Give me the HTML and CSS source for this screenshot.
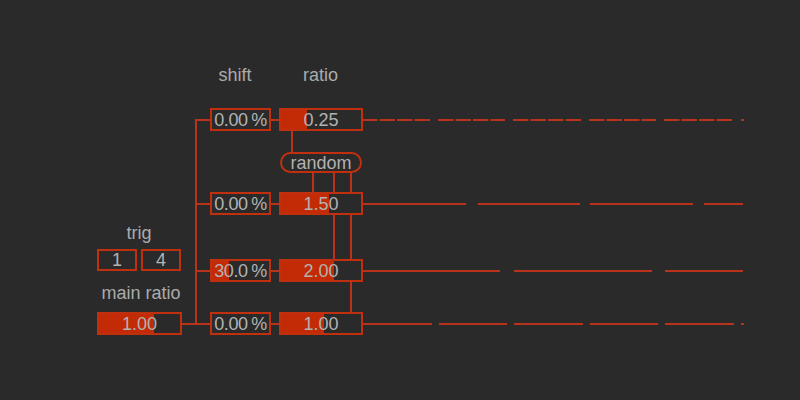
FILE: index.html
```html
<!DOCTYPE html>
<html>
<head>
<meta charset="utf-8">
<link rel="stylesheet" href="styles.css">
</head>
<body>
<div class="patch">
  <svg class="wires" width="800" height="400" viewBox="0 0 800 400">
    <g class="cords">
      <path d="M196 119 V325"/>
      <path d="M196 120 H211 M196 204 H211 M196 271 H211 M181 324 H211"/>
      <path d="M269 120 H280 M269 204 H280 M269 271 H280 M269 324 H280"/>
      <path d="M292 130 V153 M313 171 V193 M334 171 V260 M351 171 V313"/>
    </g>
    <g class="cords fine">
      <path d="M362 120 H430 M438 120 H505 M513 120 H581 M589 120 H656 M664 120 H732"/>
    </g>
    <g class="cords">
      <path d="M741 120 H744"/>
      <path d="M362 204 H466 M478 204 H580 M590 204 H693 M704 204 H743"/>
      <path d="M362 271 H500 M514 271 H652 M665 271 H743"/>
      <path d="M362 324 H432 M439 324 H507 M514 324 H583 M590 324 H658 M665 324 H734 M741 324 H744"/>
    </g>
  </svg>

  <div class="label lbl-shift">shift</div>
  <div class="label lbl-ratio">ratio</div>
  <div class="label lbl-trig">trig</div>
  <div class="label lbl-main">main ratio</div>

  <div class="num trig-a"><span>1</span></div>
  <div class="num trig-b"><span>4</span></div>
  <div class="num main"><div class="fill" style="width:55px"></div><span>1.00</span></div>

  <div class="num shift r1"><span>0.00 %</span></div>
  <div class="num shift r2"><span>0.00 %</span></div>
  <div class="num shift r3"><div class="fill" style="width:17px"></div><span>30.0 %</span></div>
  <div class="num shift r4"><span>0.00 %</span></div>

  <div class="num ratio r1"><div class="fill" style="width:26px"></div><span>0.25</span></div>
  <div class="num ratio r2"><div class="fill" style="width:48px"></div><span>1.50</span></div>
  <div class="num ratio r3"><div class="fill" style="width:53px"></div><span>2.00</span></div>
  <div class="num ratio r4"><div class="fill" style="width:43px"></div><span>1.00</span></div>

  <div class="msg random">random</div>
</div>
</body>
</html>
```

FILE: styles.css
```css
html, body {
  margin: 0;
  padding: 0;
  background: #2a2a2a;
}

.patch {
  position: relative;
  width: 800px;
  height: 400px;
  background: #2a2a2a;
  font-family: "Liberation Sans", Arial, sans-serif;
  font-size: 18px;
  color: #b2b2b2;
  overflow: hidden;
}

.wires {
  position: absolute;
  left: 0;
  top: 0;
}

.cords path {
  fill: none;
  stroke: #b8321c;
  stroke-width: 2;
  stroke-linecap: butt;
}

.cords.fine path {
  stroke-dasharray: 15.5 2;
}

.label {
  position: absolute;
  line-height: 20px;
  text-align: center;
  white-space: nowrap;
  color: #ababab;
}

.lbl-shift { left: 205px; top: 65px; width: 60px; }
.lbl-ratio { left: 279px; top: 65px; width: 83px; }
.lbl-trig  { left: 109px; top: 223px; width: 60px; }
.lbl-main  { left: 91px;  top: 283px; width: 100px; }

.num {
  position: absolute;
  box-sizing: border-box;
  height: 23px;
  border: 2px solid #c0300e;
  background: #2a2a2a;
  display: flex;
  align-items: center;
  justify-content: center;
  overflow: hidden;
}

.num span {
  position: relative;
  line-height: 19px;
  padding-top: 1px;
  white-space: nowrap;
}

.num .fill {
  position: absolute;
  left: 0;
  top: 0;
  bottom: 0;
  background: #c22b05;
}

.trig-a { left: 97px;  top: 249px; width: 40px; height: 22px; }
.trig-b { left: 141px; top: 249px; width: 40px; height: 22px; }
.main   { left: 97px;  top: 312px; width: 85px; }

.shift { left: 210px; width: 61px; }
.shift span { word-spacing: -1px; letter-spacing: -0.4px; }
.ratio { left: 279px; width: 84px; }

.r1 { top: 108px; }
.r2 { top: 192px; }
.r3 { top: 259px; }
.r4 { top: 312px; }

.msg {
  position: absolute;
  box-sizing: border-box;
  border: 2px solid #c0300e;
  border-radius: 11px;
  background: #2a2a2a;
  display: flex;
  align-items: center;
  justify-content: center;
  line-height: 18px;
}

.random { left: 280px; top: 152px; width: 82px; height: 21px; }
```
